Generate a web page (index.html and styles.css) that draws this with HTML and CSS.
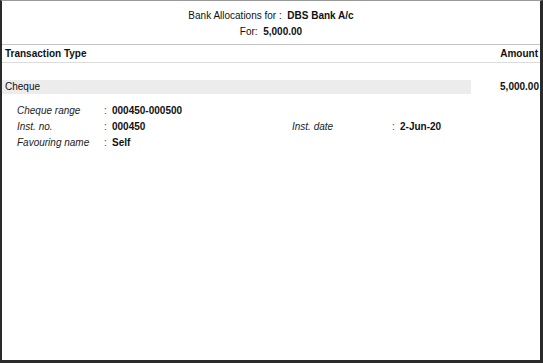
FILE: index.html
```html
<!DOCTYPE html>
<html>
<head>
<meta charset="utf-8">
<link rel="stylesheet" href="styles.css">
</head>
<body>
<div class="frame">
  <header class="title">
    <div class="title-line">Bank Allocations for :&nbsp; <b>DBS Bank A/c</b></div>
    <div class="title-line">For:&nbsp; <b>5,000.00</b></div>
  </header>
  <div class="colhead">
    <span>Transaction Type</span>
    <span>Amount</span>
  </div>
  <div class="entry">
    <span class="entry-type">Cheque</span>
    <span class="entry-amt">5,000.00</span>
  </div>
  <div class="details">
    <div class="drow">
      <span class="lbl">Cheque range</span><span class="colon">:</span><span class="val">000450-000500</span>
    </div>
    <div class="drow">
      <span class="lbl">Inst. no.</span><span class="colon">:</span><span class="val val-mid">000450</span>
      <span class="lbl lbl2">Inst. date</span><span class="colon">:</span><span class="val">2-Jun-20</span>
    </div>
    <div class="drow">
      <span class="lbl">Favouring name</span><span class="colon">:</span><span class="val">Self</span>
    </div>
  </div>
</div>
</body>
</html>
```
FILE: styles.css
```css
html, body {
  margin: 0;
  padding: 0;
  background: #fff;
}
body {
  font-family: "Liberation Sans", Arial, sans-serif;
  font-size: 10px;
  color: #111;
}
.frame {
  box-sizing: border-box;
  width: 543px;
  height: 363px;
  border-top: 1px solid #9a9a9a;
  border-left: 2px solid #2a2a2a;
  border-right: 3px solid #2a2a2a;
  border-bottom: 3px solid #2a2a2a;
  background: #fff;
}
.title {
  text-align: center;
  padding-top: 7px;
  height: 44px;
  box-sizing: border-box;
  border-bottom: 1px solid #c4c4c4;
}
.title-line {
  height: 16px;
  line-height: 16px;
}
.title b { font-weight: bold; }
.colhead {
  display: flex;
  justify-content: space-between;
  font-weight: bold;
  height: 18px;
  line-height: 16px;
  padding: 1px 2px 0 3px;
  box-sizing: border-box;
  border-bottom: 1px solid #dcdcdc;
}
.entry {
  margin-top: 17px;
  height: 14px;
  background: #ececec;
  display: flex;
  justify-content: space-between;
  align-items: stretch;
  padding-left: 3px;
}
.entry-type { line-height: 14px; }
.entry-amt {
  background: #fff;
  width: 68px;
  text-align: right;
  font-weight: bold;
  line-height: 14px;
  padding-right: 1px;
}
.details {
  padding-top: 9px;
  padding-left: 15px;
}
.drow {
  display: flex;
  height: 16px;
  line-height: 16px;
}
.lbl {
  font-style: italic;
  color: #222;
  width: 87px;
}
.colon {
  width: 8px;
  color: #444;
}
.val {
  font-weight: bold;
}
.val-mid {
  width: 180px;
}
.lbl2 {
  width: 100px;
}
```
